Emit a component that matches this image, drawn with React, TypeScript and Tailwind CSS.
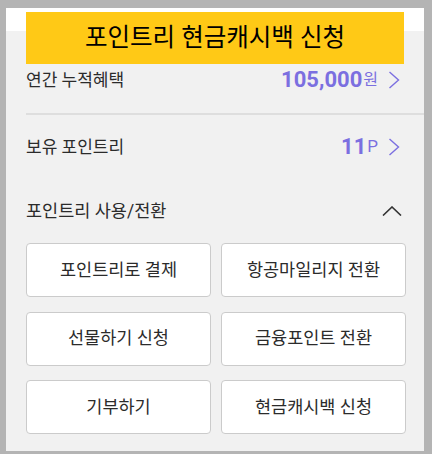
import React from 'react';

const font = { fontFamily: "Roboto, 'Noto Sans CJK KR', sans-serif" };

const ChevronRight: React.FC = () => (
  <svg width="12" height="18" viewBox="0 0 12 18" fill="none" className="ml-[10px]">
    <path d="M1.5 1L10.5 9L1.5 17" stroke="#7b6fe0" strokeWidth="1.4" />
  </svg>
);

const ChevronUp: React.FC = () => (
  <svg width="20" height="10" viewBox="0 0 20 10" fill="none">
    <path d="M1 9.5L10 1L19 9.5" stroke="#333" strokeWidth="1.6" />
  </svg>
);

const actions = ['포인트리로 결제', '항공마일리지 전환', '선물하기 신청', '금융포인트 전환', '기부하기', '현금캐시백 신청'];

const App: React.FC = () => {
  return (
    <div className="w-[432px] h-[454px] bg-[#b4b4b4] pt-[8px] pl-[6px] pr-[8px] pb-[3px]" style={font}>
      <div className="relative h-full bg-[#f1f1f1] flex flex-col">
        <div className="h-[23px] bg-white" />

        {/* overlay banner */}
        <div className="absolute left-[20px] top-[4px] w-[378px] h-[52px] bg-[#ffc916] flex items-center justify-center">
          <span className="text-[24.5px] font-normal text-black leading-none">포인트리 현금캐시백 신청</span>
        </div>

        <div className="h-[82px] pl-[20px] pr-[24px] pt-[37px] flex items-start justify-between">
          <span className="text-[17px] leading-[24px] text-[#2b2b2b]">연간 누적혜택</span>
          <div className="flex items-center h-[24px]">
            <span className="text-[22px] font-bold text-[#7b6fe0] leading-none">105,000</span>
            <span className="text-[16px] text-[#7b6fe0] leading-none ml-[1px]">원</span>
            <ChevronRight />
          </div>
        </div>
        <div className="h-[2px] ml-[20px] bg-[#dedede]" />

        <div className="h-[63px] pl-[20px] pr-[24px] flex items-center justify-between">
          <span className="text-[17px] leading-[24px] text-[#2b2b2b]">보유 포인트리</span>
          <div className="flex items-center">
            <span className="text-[22px] font-bold text-[#7b6fe0] leading-none">11</span>
            <span className="text-[17px] text-[#7b6fe0] leading-none ml-[1px]">P</span>
            <ChevronRight />
          </div>
        </div>

        <div className="h-[65px] pl-[20px] pr-[22px] flex items-center justify-between">
          <span className="text-[17.5px] leading-[24px] text-[#2b2b2b]">포인트리 사용/전환</span>
          <ChevronUp />
        </div>

        <div className="grid grid-cols-2 gap-x-[10px] gap-y-[14.5px] pl-[20px] pr-[18px]">
          {actions.map((a) => (
            <div
              key={a}
              className="h-[54px] bg-white border border-[#cbcbcb] rounded-[4px] flex items-center justify-center text-[17.5px] text-[#2b2b2b]"
            >
              {a}
            </div>
          ))}
        </div>
      </div>
    </div>
  );
};

export default App;
